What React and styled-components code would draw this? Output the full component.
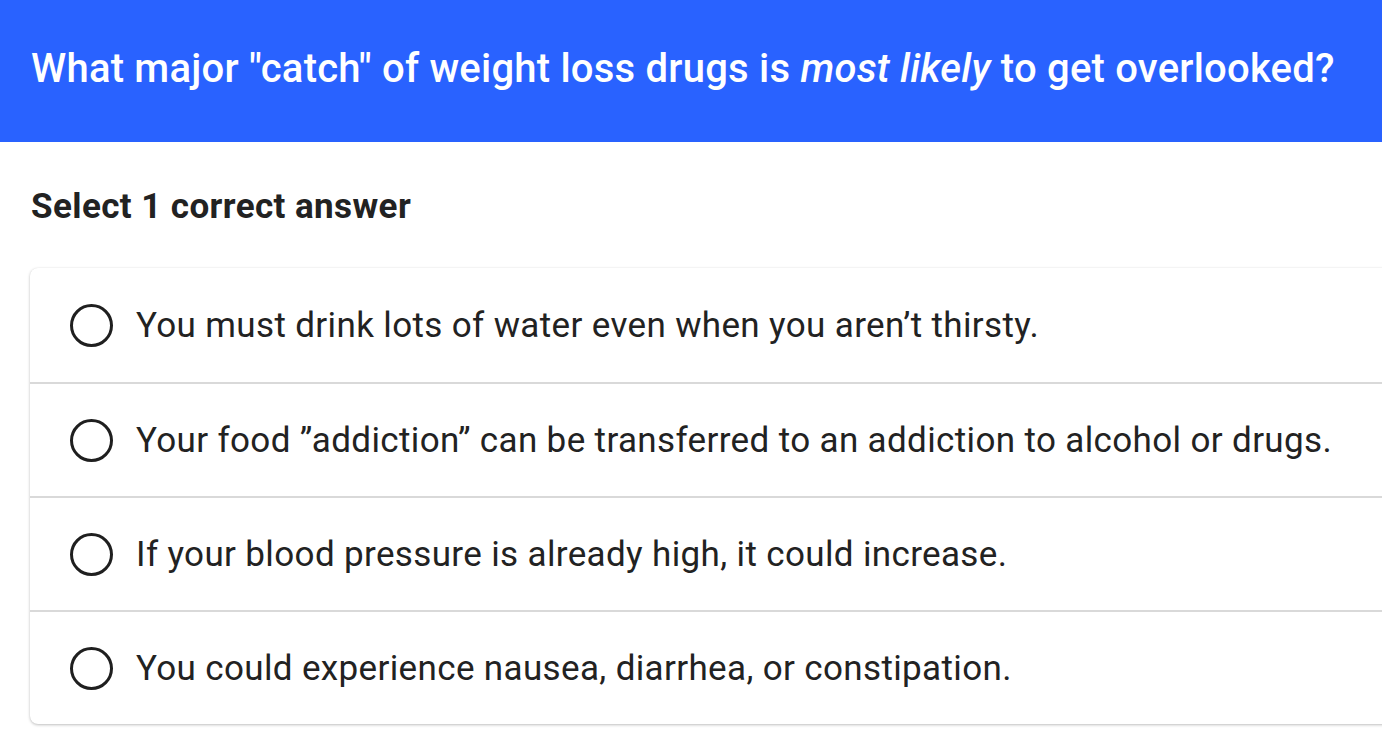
import styled, { createGlobalStyle } from 'styled-components';

const GlobalStyle = createGlobalStyle`
  html, body {
    margin: 0;
    padding: 0;
    background: #ffffff;
    overflow: hidden;
    font-family: Roboto, "Noto Sans", sans-serif;
  }
`;

const options = [
  'You must drink lots of water even when you aren\u2019t thirsty.',
  'Your food \u201daddiction\u201d can be transferred to an addiction to alcohol or drugs.',
  'If your blood pressure is already high, it could increase.',
  'You could experience nausea, diarrhea, or constipation.',
];

const Page = styled.div`
  width: 100%;
  min-height: 734px;
`;

const Header = styled.header`
  background: #2962ff;
  height: 142px;
  display: flex;
  align-items: center;
  padding: 0 31px;
  box-sizing: border-box;
`;

const Title = styled.h1`
  margin: 0 0 6px 0;
  color: #ffffff;
  font-size: 40px;
  font-weight: 500;
  letter-spacing: 0.22px;
  white-space: nowrap;
  em {
    font-weight: 500;
  }
`;

const Body = styled.main`
  padding: 44px 0 0 30px;
`;

const Prompt = styled.h2`
  margin: 0 0 40px 1px;
  font-size: 35px;
  line-height: 42px;
  font-weight: 700;
  letter-spacing: 0.4px;
  color: #222222;
`;

const Card = styled.ul`
  list-style: none;
  margin: 0 -40px 0 0;
  padding: 0;
  background: #ffffff;
  border-radius: 8px;
  box-shadow: 0 1px 3px rgba(0, 0, 0, 0.25), 0 0 1px rgba(0, 0, 0, 0.08);
`;

const Option = styled.li`
  display: flex;
  align-items: center;
  gap: 23px;
  height: 114px;
  padding-left: 40px;
  box-sizing: border-box;
  border-top: ${(p) => (p.$first ? 'none' : '2px solid #d9d9d9')};
  cursor: pointer;
`;

const Radio = styled.span`
  width: 43px;
  height: 43px;
  border-radius: 50%;
  border: 3.5px solid #1f1f1f;
  box-sizing: border-box;
  flex-shrink: 0;
`;

const Label = styled.span`
  font-size: 35px;
  letter-spacing: 0.36px;
  color: #222222;
  white-space: nowrap;
`;

export default function App() {
  return (
    <Page>
      <GlobalStyle />
      <Header>
        <Title>
          What major "catch" of weight loss drugs is <em>most likely</em> to get overlooked?
        </Title>
      </Header>
      <Body>
        <Prompt>Select 1 correct answer</Prompt>
        <Card>
          {options.map((text, i) => (
            <Option key={i} $first={i === 0}>
              <Radio />
              <Label>{text}</Label>
            </Option>
          ))}
        </Card>
      </Body>
    </Page>
  );
}
